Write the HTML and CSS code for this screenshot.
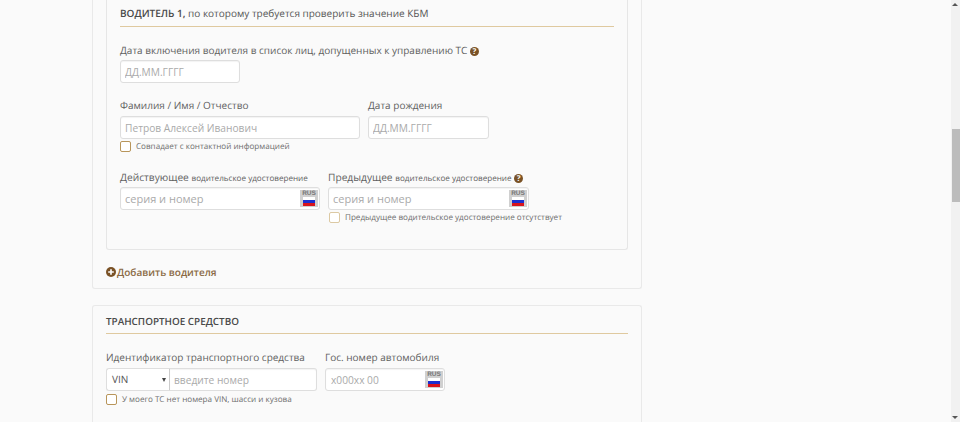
FILE: index.html
```html
<!doctype html>
<html>
<head>
<meta charset="utf-8">
<title>КБМ</title>
<link rel="stylesheet" href="styles.css">
</head>
<body>
<div class="page">
	<div class="content">
		<div class="card card-first">
			<div class="inner">
				<h3 class="title"><b>ВОДИТЕЛЬ 1,</b> по которому требуется проверить значение КБМ</h3>
				<div class="row row-date">
					<div class="field">
						<label class="label">Дата включения водителя в список лиц, допущенных к управлению ТС <i class="help">?</i></label>
						<input class="input w-date" placeholder="ДД.ММ.ГГГГ">
					</div>
				</div>
				<div class="row row-name">
					<div class="field">
						<label class="label">Фамилия / Имя / Отчество</label>
						<input class="input w-name" placeholder="Петров Алексей Иванович">
						<div class="check"><span class="box"></span>Совпадает с контактной информацией</div>
					</div>
					<div class="field">
						<label class="label">Дата рождения</label>
						<input class="input w-birth" placeholder="ДД.ММ.ГГГГ">
					</div>
				</div>
				<div class="row row-license">
					<div class="field">
						<label class="label big">Действующее <small>водительское удостоверение</small></label>
						<div class="plate w-lic">
							<input class="input input-lg" placeholder="серия и номер">
							<span class="rus">RUS<span class="flag"><i class="f-w"></i><i class="f-b"></i><i class="f-r"></i></span></span>
						</div>
					</div>
					<div class="field">
						<label class="label big">Предыдущее <small>водительское удостоверение</small> <i class="help">?</i></label>
						<div class="plate w-prev">
							<input class="input input-lg" placeholder="серия и номер">
							<span class="rus">RUS<span class="flag"><i class="f-w"></i><i class="f-b"></i><i class="f-r"></i></span></span>
						</div>
						<div class="check check-light"><span class="box"></span>Предыдущее водительское удостоверение отсутствует</div>
					</div>
				</div>
			</div>
			<a class="add" href="javascript:;">
				<svg width="10" height="10" viewBox="0 0 10 10"><circle cx="5" cy="5" r="5" fill="#7a5226"/><path d="M5 2.2v5.6M2.2 5h5.6" stroke="#fafafa" stroke-width="1.7"/></svg>
				Добавить водителя
			</a>
		</div>
		<div class="card card-second">
			<h3 class="title">ТРАНСПОРТНОЕ СРЕДСТВО</h3>
			<div class="row row-car">
				<div class="field">
					<label class="label">Идентификатор транспортного средства</label>
					<div class="vin">
						<span class="select">VIN<i class="arrow"></i></span>
						<input class="input" placeholder="введите номер">
					</div>
					<div class="check"><span class="box"></span>У моего ТС нет номера VIN, шасси и кузова</div>
				</div>
				<div class="field">
					<label class="label">Гос. номер автомобиля</label>
					<div class="plate w-car">
						<input class="input" placeholder="x000xx 00">
						<span class="rus">RUS<span class="flag"><i class="f-w"></i><i class="f-b"></i><i class="f-r"></i></span></span>
					</div>
				</div>
			</div>
		</div>
	</div>
	<div class="scrollbar">
		<span class="sb-up"></span>
		<span class="sb-thumb"></span>
		<span class="sb-down"></span>
	</div>
</div>
</body>
</html>
```

FILE: styles.css
```css
*{ margin:0; padding:0; box-sizing:border-box;}
html,body{ height:422px; overflow:hidden;}
body{ background:#fafafa; font-family:"Open Sans","Noto Sans",sans-serif; color:#555; text-rendering:geometricPrecision;}

.page{ display:flex; height:422px;}
.content{ width:951px; height:422px; overflow:hidden; padding-left:92px;}

.card{ width:550px; border:1px solid #e9e9e9; border-radius:3px; padding:0 13px;}
.card-first{ height:289px; border-top:0; border-radius:0 0 3px 3px;}
.card-second{ height:117px; margin-top:16px; border-bottom:0; border-radius:3px 3px 0 0; padding-top:6px;}

.inner{ width:522px; height:250px; margin-bottom:14px; padding:0 13px; border:1px solid #e6e6e6; border-top:0; border-radius:0 0 3px 3px;}

.title{ height:27px; font-size:10px; line-height:26px; font-weight:400; color:#555; border-bottom:1px solid #dfc99f;}
.title b{ font-weight:600; color:#4a4a4a;}
.card-second .title{ height:22px; line-height:18px; font-weight:600; color:#4a4a4a; font-size:9.9px;}

.row{ display:flex;}
.row-date{ margin-top:15px;}
.row-name{ margin-top:14px; gap:8px;}
.row-license{ margin-top:17px; gap:8px;}
.row-car{ margin-top:15px; gap:8px;}

.label{ display:block; height:18px; font-size:10px; line-height:16px; color:#5f5f5f; white-space:nowrap;}
.label.big{ font-size:10.2px;}
.label small{ font-size:8.1px;}
.row-name .label,.row-car .label{ height:19px;}

.help{ display:inline-block; width:9px; height:9px; border-radius:50%; background:#7a5226; color:#fafafa; font:700 8px/9px "Open Sans",sans-serif; text-align:center;}

.input{ display:block; height:23px; padding:0 4px; background:#fff; border:1px solid #dedede; border-radius:3px; box-shadow:inset 0 1px 1px rgba(0,0,0,.05); font:10.2px "Open Sans",sans-serif; color:#555; outline:0;}
.input::placeholder{ color:#aaa; opacity:1;}
.input-lg{ font-size:11px;}
.w-date{ width:120px;}
.w-name{ width:240px;}
.w-birth{ width:121px;}

.plate{ position:relative;}
.plate .input{ width:100%;}
.w-lic{ width:200px;}
.w-prev{ width:201px;}
.w-car{ width:120px;}
.w-car .input{ padding-left:5px;}
.rus{ position:absolute; right:2px; top:3px; width:18px; height:17px; background:#d0d0d0; font:700 6.5px/7px "Liberation Sans",sans-serif; color:#777; text-align:center;}
.flag{ display:block; width:12px; margin:0 auto;}
.flag i{ display:block; height:3px;}
.f-w{ background:#fff;}
.f-b{ background:#1c2fd0;}
.f-r{ background:#d8141c;}

.check{ display:flex; align-items:center; margin-top:2px; height:11px; font-size:8.1px; color:#6e6e6e; white-space:nowrap;}
.check-light{ padding-left:1px;}
.check-light .box{ border-color:#dcc9a3;}
.box{ flex:none; width:11px; height:11px; margin-right:5px; background:#fff; border:1px solid #b8955a; border-radius:2px;}
.row-car .check{ margin-top:3px;}

.add{ display:flex; align-items:center; gap:1px; height:16px; font-size:10px; font-weight:600; color:#8a6a45; text-decoration:none;}

.vin{ display:flex; width:211px;}
.select{ position:relative; flex:none; width:64px; height:23px; padding-left:5px; background:#fff; border:1px solid #dedede; border-radius:3px 0 0 3px; border-right-color:#ccc; font-size:10px; line-height:21px; color:#555;}
.arrow{ position:absolute; right:3px; top:9px; border:2.5px solid transparent; border-top:4px solid #444; border-bottom:0;}
.vin .input{ flex:1; min-width:0; border-left:0; border-radius:0 3px 3px 0;}

.scrollbar{ position:relative; width:9px; height:422px; background:#f1f1f1;}
.sb-up,.sb-down{ position:absolute; left:1px; border:3px solid transparent;}
.sb-up{ top:3px; border-bottom:3px solid #555; border-top:0;}
.sb-down{ bottom:3px; border-top:3px solid #555; border-bottom:0;}
.sb-thumb{ position:absolute; left:1px; right:0; top:129px; height:73px; background:#bcbcbc;}
```
